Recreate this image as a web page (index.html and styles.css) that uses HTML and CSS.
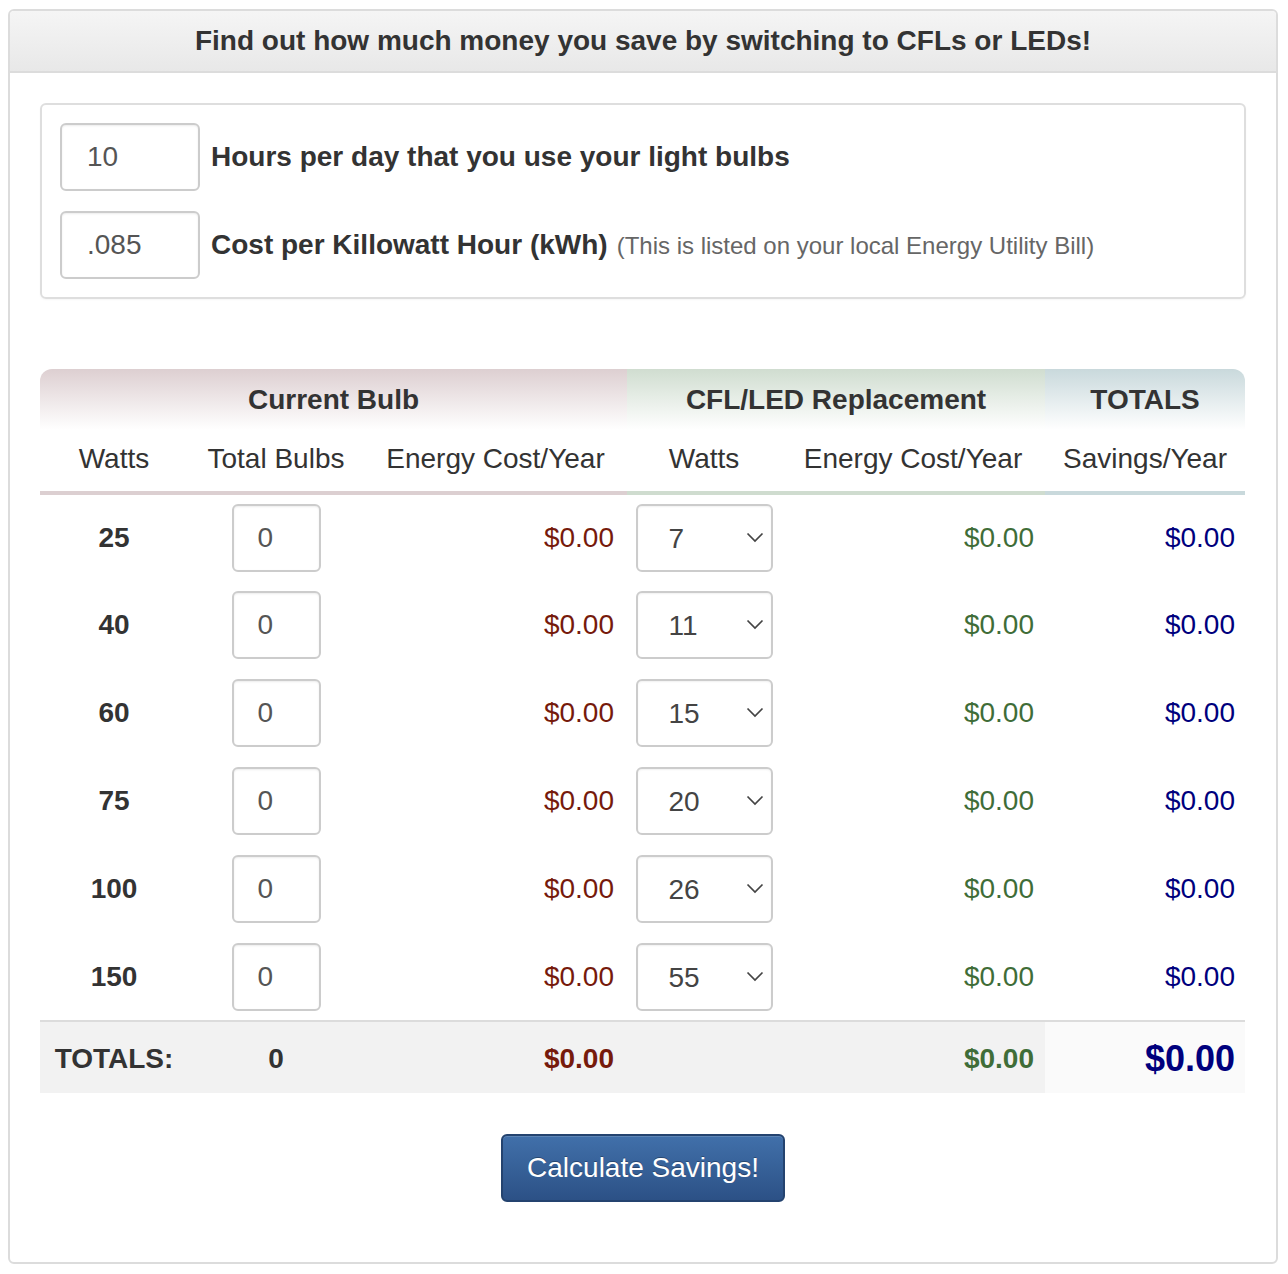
FILE: index.html
```html
<!DOCTYPE html>
<html>
<head>
<meta charset="utf-8">
<link rel="stylesheet" href="styles.css">
</head>
<body>
<div class="panel">
  <div class="panel-head">Find out how much money you save by switching to CFLs or LEDs!</div>
  <div class="panel-body">
    <div class="well">
      <div class="field">
        <input class="text-in wide" type="text" value="10">
        <span class="flabel">Hours per day that you use your light bulbs</span>
      </div>
      <div class="field">
        <input class="text-in wide" type="text" value=".085">
        <span class="flabel">Cost per Killowatt Hour (kWh)</span>
        <span class="fnote">(This is listed on your local Energy Utility Bill)</span>
      </div>
    </div>

    <table class="calc">
      <colgroup>
        <col class="c1"><col class="c2"><col class="c3"><col class="c4"><col class="c5"><col class="c6">
      </colgroup>
      <thead>
        <tr class="grp">
          <th colspan="3" class="g-cur">Current Bulb</th>
          <th colspan="2" class="g-cfl">CFL/LED Replacement</th>
          <th class="g-tot">TOTALS</th>
        </tr>
        <tr class="sub">
          <th class="b-cur">Watts</th>
          <th class="b-cur">Total Bulbs</th>
          <th class="b-cur">Energy Cost/Year</th>
          <th class="b-cfl">Watts</th>
          <th class="b-cfl">Energy Cost/Year</th>
          <th class="b-tot">Savings/Year</th>
        </tr>
      </thead>
      <tbody>
        <tr>
          <td class="watt">25</td>
          <td class="mid"><input class="text-in small" type="text" value="0"></td>
          <td class="money red">$0.00</td>
          <td class="mid"><div class="sel">7<svg viewBox="0 0 18 11" class="chev"><path d="M1.5 1.5 L9 9 L16.5 1.5"/></svg></div></td>
          <td class="money green">$0.00</td>
          <td class="money blue">$0.00</td>
        </tr>
        <tr>
          <td class="watt">40</td>
          <td class="mid"><input class="text-in small" type="text" value="0"></td>
          <td class="money red">$0.00</td>
          <td class="mid"><div class="sel">11<svg viewBox="0 0 18 11" class="chev"><path d="M1.5 1.5 L9 9 L16.5 1.5"/></svg></div></td>
          <td class="money green">$0.00</td>
          <td class="money blue">$0.00</td>
        </tr>
        <tr>
          <td class="watt">60</td>
          <td class="mid"><input class="text-in small" type="text" value="0"></td>
          <td class="money red">$0.00</td>
          <td class="mid"><div class="sel">15<svg viewBox="0 0 18 11" class="chev"><path d="M1.5 1.5 L9 9 L16.5 1.5"/></svg></div></td>
          <td class="money green">$0.00</td>
          <td class="money blue">$0.00</td>
        </tr>
        <tr>
          <td class="watt">75</td>
          <td class="mid"><input class="text-in small" type="text" value="0"></td>
          <td class="money red">$0.00</td>
          <td class="mid"><div class="sel">20<svg viewBox="0 0 18 11" class="chev"><path d="M1.5 1.5 L9 9 L16.5 1.5"/></svg></div></td>
          <td class="money green">$0.00</td>
          <td class="money blue">$0.00</td>
        </tr>
        <tr>
          <td class="watt">100</td>
          <td class="mid"><input class="text-in small" type="text" value="0"></td>
          <td class="money red">$0.00</td>
          <td class="mid"><div class="sel">26<svg viewBox="0 0 18 11" class="chev"><path d="M1.5 1.5 L9 9 L16.5 1.5"/></svg></div></td>
          <td class="money green">$0.00</td>
          <td class="money blue">$0.00</td>
        </tr>
        <tr>
          <td class="watt">150</td>
          <td class="mid"><input class="text-in small" type="text" value="0"></td>
          <td class="money red">$0.00</td>
          <td class="mid"><div class="sel">55<svg viewBox="0 0 18 11" class="chev"><path d="M1.5 1.5 L9 9 L16.5 1.5"/></svg></div></td>
          <td class="money green">$0.00</td>
          <td class="money blue">$0.00</td>
        </tr>
      </tbody>
      <tfoot>
        <tr>
          <td class="t-lbl">TOTALS:</td>
          <td class="t-lbl">0</td>
          <td class="money red bold">$0.00</td>
          <td></td>
          <td class="money green bold">$0.00</td>
          <td class="money blue bold big">$0.00</td>
        </tr>
      </tfoot>
    </table>

    <div class="actions">
      <button class="btn" type="button">Calculate Savings!</button>
    </div>
  </div>
</div>
</body>
</html>
```

FILE: styles.css
```css
* { box-sizing: border-box; }

body {
  margin: 9px 8px 8px 8px;
  font-family: "Liberation Sans", Arial, sans-serif;
  color: #333;
  background: #fff;
}

.panel {
  width: 1270px;
  height: 1255px;
  border: 2px solid #dcdcdc;
  border-radius: 6px;
  overflow: hidden;
}

.panel-head {
  height: 62px;
  background: linear-gradient(#f5f5f5, #e8e8e8);
  border-bottom: 2px solid #dcdcdc;
  font-size: 28px;
  font-weight: bold;
  text-align: center;
  line-height: 60px;
  color: #333;
}

.panel-body {
  padding: 30px 30px 0 30px;
}

.well {
  border: 2px solid #dedede;
  border-radius: 6px;
  padding: 18px 18px 18px 18px;
  display: flex;
  flex-direction: column;
  gap: 20px;
  box-shadow: 0 1px 2px rgba(0,0,0,0.04);
}

.field {
  display: flex;
  align-items: center;
}

.text-in {
  height: 68px;
  border: 2px solid #cccccc;
  border-radius: 6px;
  font-family: "Liberation Sans", Arial, sans-serif;
  font-size: 28px;
  color: #555;
  background: #fff;
  box-shadow: inset 0 1px 2px rgba(0,0,0,0.08);
  outline: none;
}

.text-in.wide {
  width: 140px;
  padding-left: 25px;
}

.text-in.small {
  width: 89px;
  padding-left: 24px;
  display: block;
  margin: 0 auto;
}

.flabel {
  margin-left: 11px;
  font-size: 28px;
  font-weight: bold;
  color: #333;
}

.fnote {
  margin-left: 9px;
  font-size: 24px;
  color: #666;
  position: relative;
  top: 1px;
}

.calc {
  margin-top: 70px;
  width: 1205px;
  border-collapse: collapse;
  table-layout: fixed;
}

.c1 { width: 148px; }
.c2 { width: 176px; }
.c3 { width: 263px; }
.c4 { width: 154px; }
.c5 { width: 264px; }
.c6 { width: 200px; }

.calc th {
  font-size: 28px;
  padding: 0;
}

.grp th {
  height: 61px;
  font-weight: bold;
  color: #333;
  vertical-align: middle;
}

.g-cur {
  background: linear-gradient(#ddcfd1, #ffffff);
  border-top-left-radius: 12px;
}

.g-cfl {
  background: linear-gradient(#d0ddd0, #ffffff);
}

.g-tot {
  background: linear-gradient(#c9d9dc, #ffffff);
  border-top-right-radius: 12px;
}

.sub th {
  height: 63px;
  font-weight: normal;
  color: #333;
  vertical-align: middle;
  padding-bottom: 4px;
}

.b-cur { border-bottom: 4px solid #dccfd1; }
.b-cfl { border-bottom: 4px solid #cfdccf; }
.b-tot { border-bottom: 4px solid #c9d9dc; }

.calc tbody td {
  height: 88px;
  font-size: 28px;
  vertical-align: middle;
  padding: 0;
}

.watt {
  text-align: center;
  font-weight: bold;
  color: #333;
}

.mid { text-align: center; }

.money {
  text-align: right;
}

.money.red { color: #761a0c; padding-right: 13px; }
.money.green { color: #3f6d38; padding-right: 11px; }
.money.blue { color: #00007d; padding-right: 10px; }

.bold { font-weight: bold; }
.big { font-size: 36px; }

.sel {
  width: 137px;
  height: 68px;
  margin: 0 auto;
  border: 2px solid #cccccc;
  border-radius: 6px;
  background: #fff;
  box-shadow: inset 0 1px 2px rgba(0,0,0,0.06);
  display: flex;
  align-items: center;
  justify-content: space-between;
  padding: 2px 7px 0 31px;
  font-size: 28px;
  color: #444;
  text-align: left;
}

.chev {
  width: 18px;
  height: 11px;
  fill: none;
  stroke: #444;
  stroke-width: 1.7;
  margin-top: -3px;
}

.calc tfoot td {
  height: 72px;
  font-size: 28px;
  background: #f2f2f2;
  border-top: 2px solid #dcdcdc;
  vertical-align: middle;
  padding: 2px 0 0 0;
}

.calc tfoot td.big {
  background: #fafafa;
  font-size: 36px;
}

.calc tfoot td.money.red { padding-right: 13px; }
.calc tfoot td.money.green { padding-right: 11px; }
.calc tfoot td.money.blue { padding-right: 10px; }

.t-lbl {
  text-align: center;
  font-weight: bold;
  color: #333;
}

.actions {
  display: flex;
  justify-content: center;
  margin-top: 41px;
}

.btn {
  width: 284px;
  height: 68px;
  border: 2px solid #24436f;
  border-radius: 6px;
  background: linear-gradient(#4170aa, #2c5186);
  color: #fff;
  font-family: "Liberation Sans", Arial, sans-serif;
  font-size: 28px;
  text-shadow: 0 -1px 0 rgba(0,0,0,0.3);
  box-shadow: inset 0 1px 0 rgba(255,255,255,0.15);
  padding: 0;
}
```
